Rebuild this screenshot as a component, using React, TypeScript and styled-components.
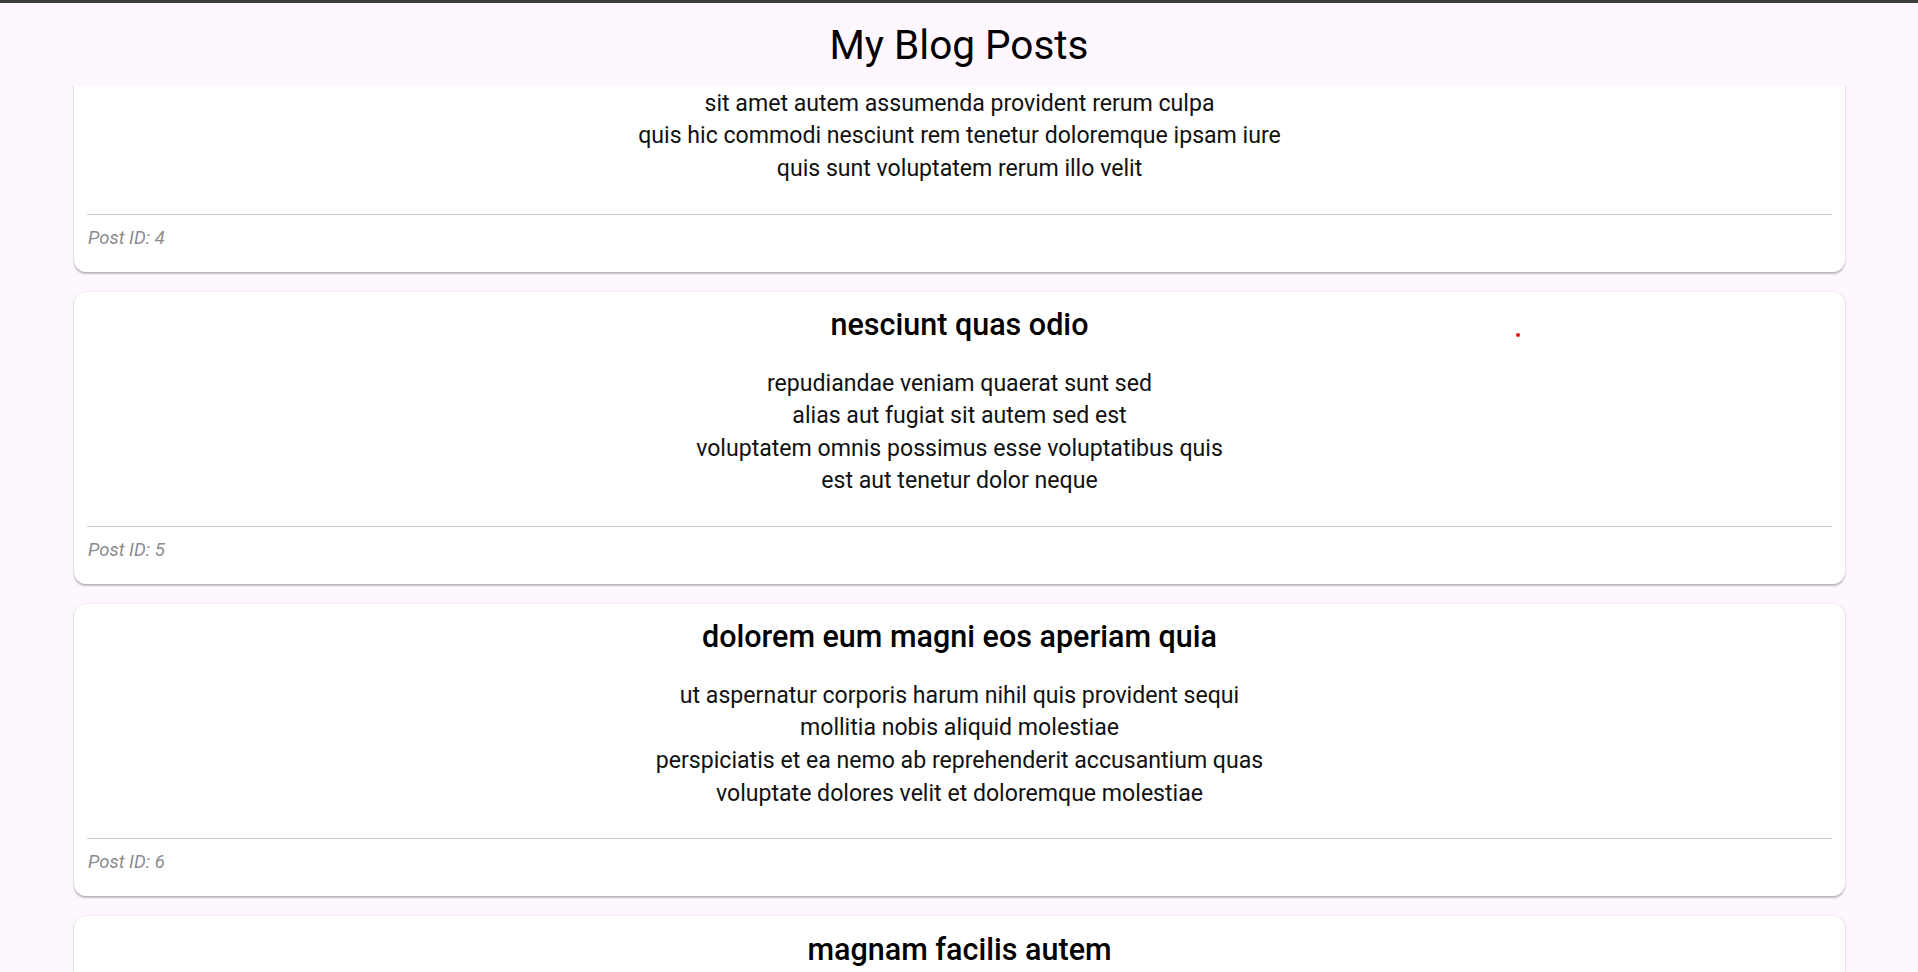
import React, { useLayoutEffect, useRef } from "react";
import styled, { createGlobalStyle } from "styled-components";

interface Post {
  id: number;
  title: string;
  body: string;
}

const posts: Post[] = [
  {
    id: 1,
    title: "sunt aut facere repellat provident occaecati excepturi optio reprehenderit",
    body: "quia et suscipit\nsuscipit recusandae consequuntur expedita et cum\nreprehenderit molestiae ut ut quas totam\nnostrum rerum est autem sunt rem eveniet architecto",
  },
  {
    id: 2,
    title: "qui est esse",
    body: "est rerum tempore vitae\nsequi sint nihil reprehenderit dolor beatae ea dolores neque\nfugiat blanditiis voluptate porro vel nihil molestiae ut reiciendis\nqui aperiam non debitis possimus qui neque nisi nulla",
  },
  {
    id: 3,
    title: "ea molestias quasi exercitationem repellat qui ipsa sit aut",
    body: "et iusto sed quo iure\nvoluptatem occaecati omnis eligendi aut ad\nvoluptatem doloribus vel accusantium quis pariatur\nmolestiae porro eius odio et labore et velit aut",
  },
  {
    id: 4,
    title: "eum et est occaecati",
    body: "ullam et saepe reiciendis voluptatem adipisci\nsit amet autem assumenda provident rerum culpa\nquis hic commodi nesciunt rem tenetur doloremque ipsam iure\nquis sunt voluptatem rerum illo velit",
  },
  {
    id: 5,
    title: "nesciunt quas odio",
    body: "repudiandae veniam quaerat sunt sed\nalias aut fugiat sit autem sed est\nvoluptatem omnis possimus esse voluptatibus quis\nest aut tenetur dolor neque",
  },
  {
    id: 6,
    title: "dolorem eum magni eos aperiam quia",
    body: "ut aspernatur corporis harum nihil quis provident sequi\nmollitia nobis aliquid molestiae\nperspiciatis et ea nemo ab reprehenderit accusantium quas\nvoluptate dolores velit et doloremque molestiae",
  },
  {
    id: 7,
    title: "magnam facilis autem",
    body: "dolore placeat quibusdam ea quo vitae\nmagni quis enim qui quis quo nemo aut saepe\nquidem repellat excepturi ut quia\nsunt ut sequi eos ea sed quas",
  },
  {
    id: 8,
    title: "dolorem dolore est ipsam",
    body: "dignissimos aperiam dolorem qui eum\nfacilis quibusdam animi sint suscipit qui sint possimus cum\nquaerat magni maiores excepturi\nipsam ut commodi dolor voluptatum modi aut vitae",
  },
  {
    id: 9,
    title: "nesciunt iure omnis dolorem tempora et accusantium",
    body: "consectetur animi nesciunt iure dolore\nenim quia ad\nveniam autem ut quam aut nobis\net est aut quod aut provident voluptas autem voluptas",
  },
  {
    id: 10,
    title: "optio molestias id quia eum",
    body: "quo et expedita modi cum officia vel magni\ndoloribus qui repudiandae\nvero nisi sit\nquos veniam quod sed accusamus veritatis error",
  },
];

// the list is shown scrolled so that post 5 sits this far below the app bar
const SCROLL_ANCHOR_ID = 5;
const SCROLL_ANCHOR_OFFSET = 205.7;

const PostCard = ({ post, cardRef }: { post: Post; cardRef?: React.Ref<HTMLDivElement> }) => (
  <Card ref={cardRef}>
    <CardTitle>{post.title}</CardTitle>
    <CardBody>{post.body}</CardBody>
    <CardDivider />
    <CardFooter>Post ID: {post.id}</CardFooter>
  </Card>
);

const App = () => {
  const listRef = useRef<HTMLDivElement>(null);
  const anchorRef = useRef<HTMLDivElement>(null);

  useLayoutEffect(() => {
    const list = listRef.current;
    const anchor = anchorRef.current;
    if (list && anchor) {
      list.scrollTop = anchor.offsetTop - SCROLL_ANCHOR_OFFSET;
    }
  }, []);

  return (
    <>
      <GlobalStyle />
      <Page>
        <AppBar>
          <AppBarTitle>My Blog Posts</AppBarTitle>
        </AppBar>
        <PostList ref={listRef}>
          {posts.map((post) => (
            <PostCard key={post.id} post={post} cardRef={post.id === SCROLL_ANCHOR_ID ? anchorRef : undefined} />
          ))}
        </PostList>
        <PointerDot />
      </Page>
    </>
  );
};

export default App;

const GlobalStyle = createGlobalStyle`
  html, body {
    margin: 0;
    padding: 0;
    height: 100%;
    overflow: hidden;
    background-color: #fef7ff;
  }

  #root {
    height: 100%;
  }

  * {
    box-sizing: border-box;
  }
`;

const Page = styled.div`
  position: relative;
  height: 100vh;

  display: flex;
  flex-direction: column;

  font-family: Roboto, "Noto Sans", sans-serif;
  color: #1d1b20;
  background-color: #fef7ff;
`;

const AppBar = styled.header`
  flex: 0 0 86px;

  display: flex;
  justify-content: center;
  align-items: center;

  border-top: 3px solid #3d3d3d;
  background-color: #fef7ff;
  z-index: 1;
`;

const AppBarTitle = styled.h1`
  margin: 0;

  font-size: 40.5px;
  font-weight: 400;
  line-height: normal;
  color: #000000;
`;

const PostList = styled.div`
  position: relative;
  flex: 1;
  overflow-y: auto;
  scrollbar-width: none;

  display: flex;
  flex-direction: column;
  gap: 20px;
  padding: 8px 73px 21px 74px;

  &::-webkit-scrollbar {
    display: none;
  }
`;

const Card = styled.div`
  flex-shrink: 0;

  display: flex;
  flex-direction: column;
  padding: 15.5px 13px 23px 13px;

  border-radius: 12px;
  background-color: #ffffff;
  box-shadow: 0 1.5px 2px rgba(0, 0, 0, 0.26), 0 0 1.5px rgba(0, 0, 0, 0.12);
`;

const CardTitle = styled.h2`
  margin: 0;

  font-size: 30.5px;
  font-weight: 500;
  line-height: 36px;
  text-align: center;
  color: #000000;
`;

const CardBody = styled.p`
  margin: 24.5px 0 0 0;

  font-size: 23.1px;
  font-weight: 400;
  line-height: 32.6px;
  text-align: center;
  white-space: pre-line;
  color: #111111;
`;

const CardDivider = styled.hr`
  width: 100%;
  height: 1px;
  margin: 28px 0 0 0;

  border: none;
  background-color: #cac4d0;
`;

const CardFooter = styled.span`
  margin: 12px 0 0 1px;

  font-size: 18.5px;
  font-style: italic;
  line-height: normal;
  color: #8c8c8c;
`;

const PointerDot = styled.div`
  position: absolute;
  left: 1516px;
  top: 333px;

  width: 4px;
  height: 4px;

  border-radius: 50%;
  background-color: #ee1111;
  pointer-events: none;
`;
